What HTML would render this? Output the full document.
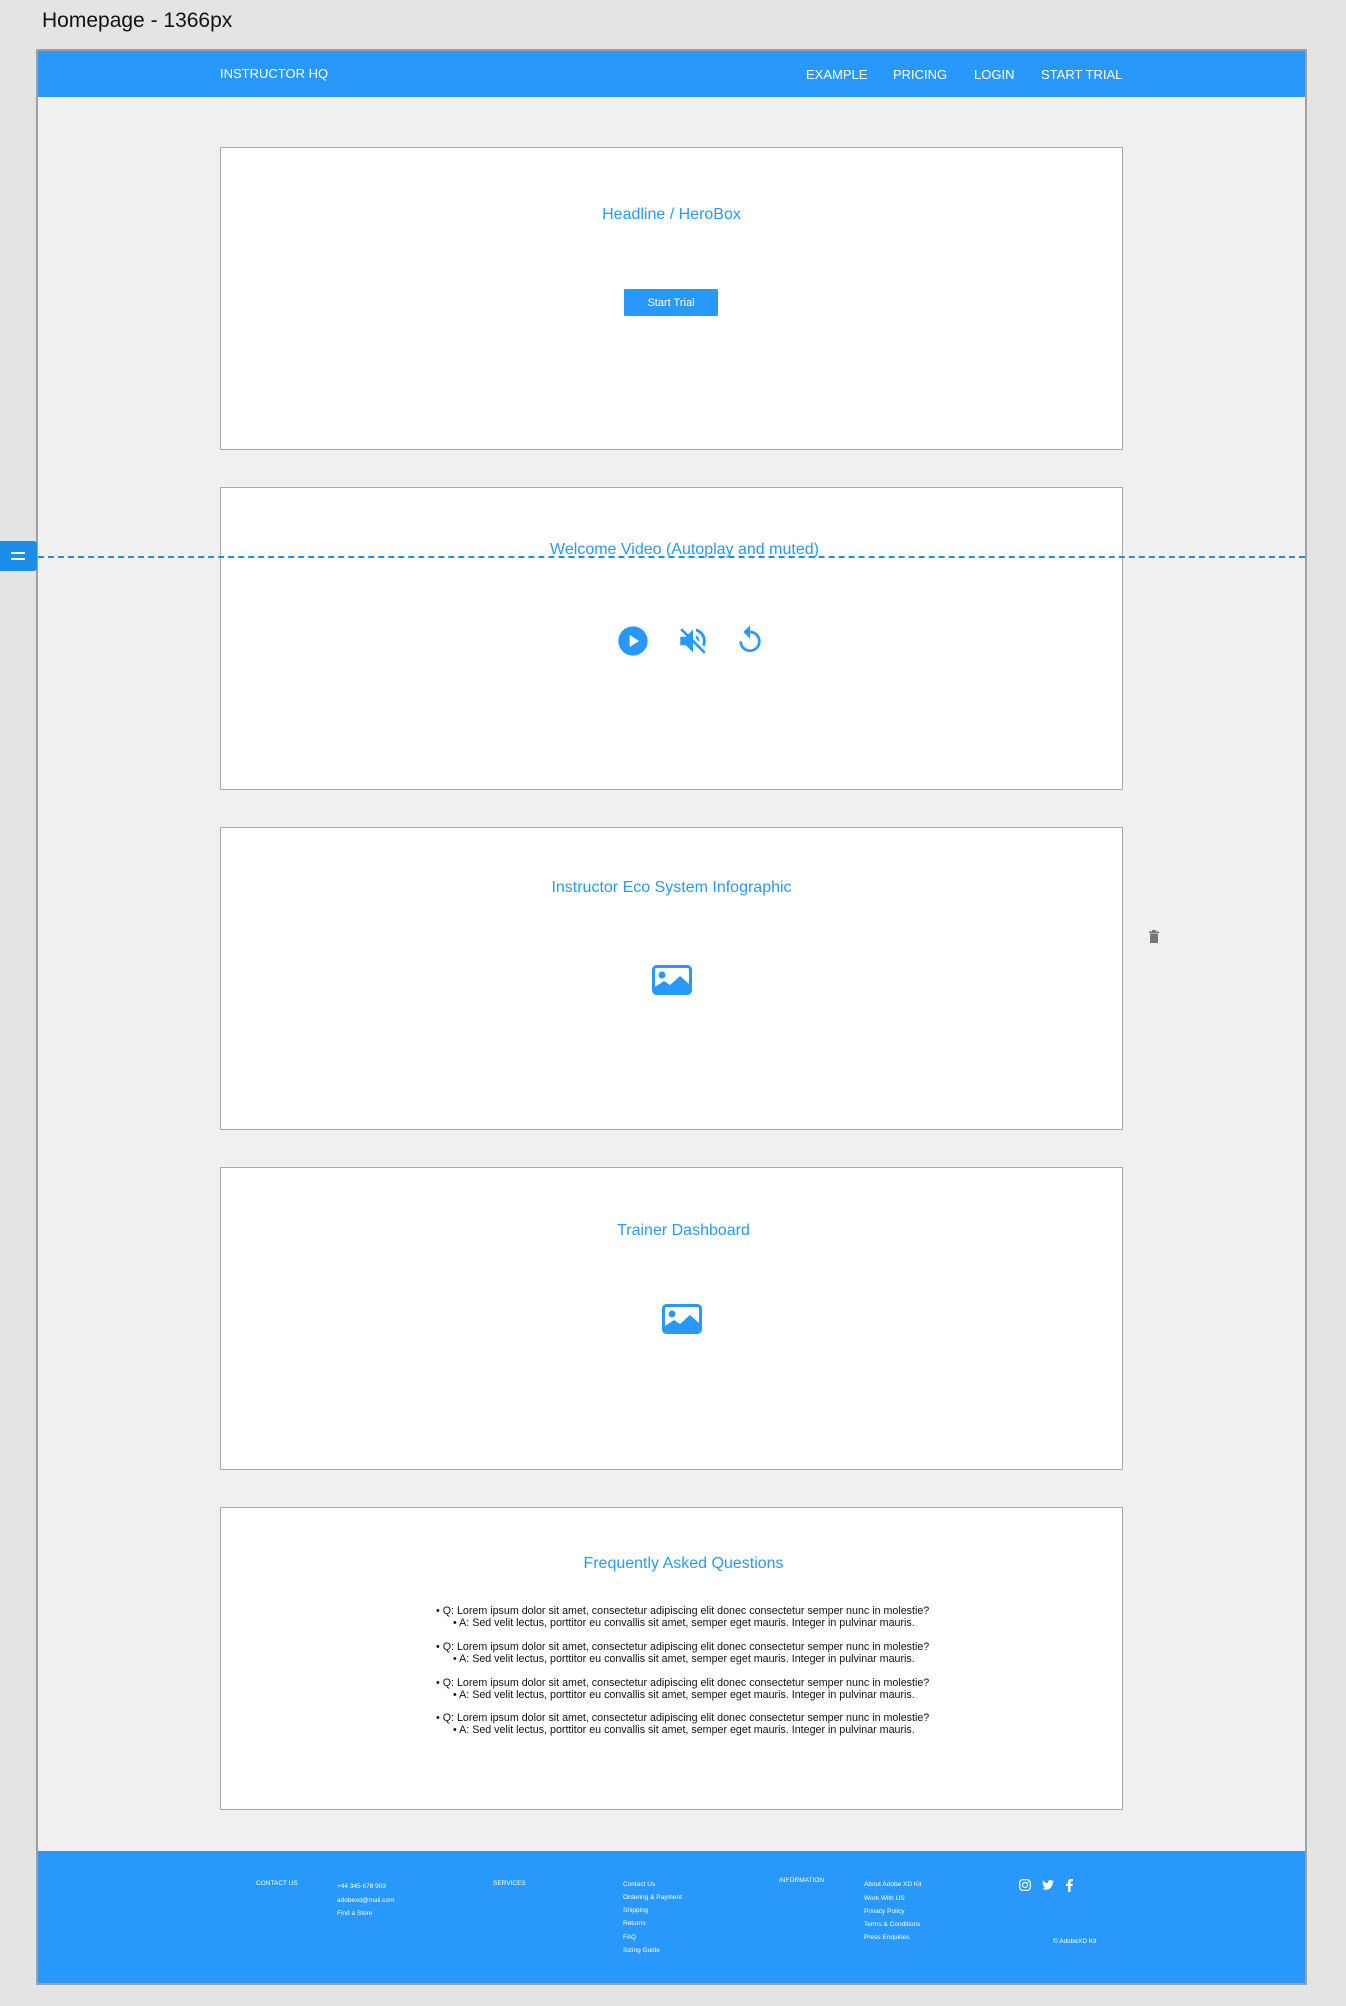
<!DOCTYPE html>
<html><head><meta charset="utf-8"><style>
*{margin:0;padding:0;box-sizing:border-box}
body{width:1346px;height:2006px;background:#e4e4e4;position:relative;overflow:hidden;font-family:"Liberation Sans",Arial,sans-serif}
.abs{position:absolute}
#title{left:42px;top:9px;font-size:21px;color:#111}
#frame{left:36px;top:49px;width:1271px;height:1936px;border:2px solid #a0a0a0;background:#f0f0f0}
#nav{left:38px;top:51px;width:1267px;height:46px;background:#2899fb}
.nt{color:#fff;font-size:13px;top:67px}
.box{left:220px;width:903px;height:303px;background:#fff;border:1.5px solid #aaa}
.h{left:220px;width:903px;text-align:center;color:#2899fb;font-size:16px}
#btn{left:624px;top:289px;width:94px;height:27px;background:#2899fb;color:#fff;font-size:11px;text-align:center;line-height:29px;border-radius:1px}
.faq{left:436px;font-size:10.7px;color:#111;white-space:nowrap;line-height:12px}
.faq span{padding-left:17px}
#foot{left:38px;top:1851px;width:1267px;height:132px;background:#2899fb}
.f{color:#fff;font-size:6.5px;white-space:nowrap}
</style></head><body>
<div id="title" class="abs">Homepage - 1366px</div>
<div id="frame" class="abs"></div>
<div id="nav" class="abs"></div>
<div class="abs nt" style="left:220px;top:66px">INSTRUCTOR HQ</div>
<div class="abs nt" style="left:806px">EXAMPLE</div>
<div class="abs nt" style="left:893px">PRICING</div>
<div class="abs nt" style="left:974px">LOGIN</div>
<div class="abs nt" style="left:1041px">START TRIAL</div>

<div class="abs box" style="top:147px"></div>
<div class="abs h" style="top:206px">Headline / HeroBox</div>
<div id="btn" class="abs">Start Trial</div>

<div class="abs box" style="top:487px"></div>
<div class="abs h" style="top:541px;left:233px">Welcome Video (Autoplay and muted)</div>
<svg class="abs" style="left:617px;top:625px" width="32" height="32" viewBox="0 0 24 24"><circle cx="12" cy="12" r="11" fill="#2899fb"/><path d="M9.5 7.5v9l7-4.5z" fill="#fff"/></svg>
<svg class="abs" style="left:675px;top:624px" width="36" height="34" viewBox="0 0 24 24" fill="#2899fb"><path d="M3 9v6h4l5 5V4L7 9H3zm13.5 3c0-1.8-1-3.3-2.5-4v2.2l2.5 2.5V12zm2.5 0c0 .9-.2 1.8-.5 2.6l1.5 1.5c.6-1.2 1-2.6 1-4.1 0-4.3-3-7.9-7-8.8v2.1c2.9.9 5 3.5 5 6.7zM4.3 3L3 4.3 19.7 21l1.3-1.3L4.3 3z"/></svg>
<svg class="abs" style="left:734px;top:623px" width="32" height="34" viewBox="0 0 24 24" fill="#2899fb"><path d="M12 5V1L7 6l5 5V7c3.3 0 6 2.7 6 6s-2.7 6-6 6-6-2.7-6-6H4c0 4.4 3.6 8 8 8s8-3.6 8-8-3.6-8-8-8z"/></svg>

<div class="abs box" style="top:827px"></div>
<div class="abs h" style="top:879px">Instructor Eco System Infographic</div>
<svg class="abs" style="left:652px;top:965px" width="40" height="30" viewBox="0 0 40 30"><rect x="1.5" y="1.5" width="37" height="27" rx="3" fill="none" stroke="#2899fb" stroke-width="3"/><circle cx="10" cy="10" r="3.5" fill="#2899fb"/><path d="M3 27V22l9-6 6 4 10-9 9 8v8z" fill="#2899fb"/></svg>
<svg class="abs" style="left:1149px;top:930px" width="10" height="13" viewBox="0 0 10 13"><rect x="3" y="0" width="4" height="1.5" fill="#777"/><rect x="0" y="1.5" width="10" height="1.5" fill="#777"/><rect x="1" y="3.5" width="8" height="9.5" fill="#777"/></svg>

<div class="abs box" style="top:1167px"></div>
<div class="abs h" style="top:1222px;left:232px">Trainer Dashboard</div>
<svg class="abs" style="left:662px;top:1304px" width="40" height="30" viewBox="0 0 40 30"><rect x="1.5" y="1.5" width="37" height="27" rx="3" fill="none" stroke="#2899fb" stroke-width="3"/><circle cx="10" cy="10" r="3.5" fill="#2899fb"/><path d="M3 27V22l9-6 6 4 10-9 9 8v8z" fill="#2899fb"/></svg>

<div class="abs box" style="top:1507px"></div>
<div class="abs h" style="top:1555px;left:232px">Frequently Asked Questions</div>
<div class="abs faq" style="top:1605px">• Q: Lorem ipsum dolor sit amet, consectetur adipiscing elit donec consectetur semper nunc in molestie?<br><span>• A: Sed velit lectus, porttitor eu convallis sit amet, semper eget mauris. Integer in pulvinar mauris.</span></div>
<div class="abs faq" style="top:1641px">• Q: Lorem ipsum dolor sit amet, consectetur adipiscing elit donec consectetur semper nunc in molestie?<br><span>• A: Sed velit lectus, porttitor eu convallis sit amet, semper eget mauris. Integer in pulvinar mauris.</span></div>
<div class="abs faq" style="top:1677px">• Q: Lorem ipsum dolor sit amet, consectetur adipiscing elit donec consectetur semper nunc in molestie?<br><span>• A: Sed velit lectus, porttitor eu convallis sit amet, semper eget mauris. Integer in pulvinar mauris.</span></div>
<div class="abs faq" style="top:1712px">• Q: Lorem ipsum dolor sit amet, consectetur adipiscing elit donec consectetur semper nunc in molestie?<br><span>• A: Sed velit lectus, porttitor eu convallis sit amet, semper eget mauris. Integer in pulvinar mauris.</span></div>

<div class="abs" style="left:38px;top:556px;width:1267px;height:0;border-top:2px dashed #1a8ee8"></div>
<div class="abs" style="left:0;top:541px;width:37px;height:30px;background:#1a8ee8;border-radius:0 3px 3px 0"></div>
<div class="abs" style="left:11px;top:552px;width:14px;height:2px;background:#fff"></div>
<div class="abs" style="left:11px;top:558px;width:14px;height:2px;background:#fff"></div>

<div id="foot" class="abs"></div>
<div class="abs f" style="left:256px;top:1880px">CONTACT US</div>
<div class="abs f" style="left:337px;top:1883px">+44 345 678 903</div>
<div class="abs f" style="left:337px;top:1897px">adobexd@mail.com</div>
<div class="abs f" style="left:337px;top:1910px">Find a Store</div>
<div class="abs f" style="left:493px;top:1880px">SERVICES</div>
<div class="abs f" style="left:623px;top:1881px">Contact Us</div>
<div class="abs f" style="left:623px;top:1894px">Ordering &amp; Payment</div>
<div class="abs f" style="left:623px;top:1907px">Shipping</div>
<div class="abs f" style="left:623px;top:1920px">Returns</div>
<div class="abs f" style="left:623px;top:1934px">FAQ</div>
<div class="abs f" style="left:623px;top:1947px">Sizing Guide</div>
<div class="abs f" style="left:779px;top:1877px">INFORMATION</div>
<div class="abs f" style="left:864px;top:1881px">About Adobe XD Kit</div>
<div class="abs f" style="left:864px;top:1895px">Work With US</div>
<div class="abs f" style="left:864px;top:1908px">Privacy Policy</div>
<div class="abs f" style="left:864px;top:1921px">Terms &amp; Conditions</div>
<div class="abs f" style="left:864px;top:1934px">Press Enquiries</div>
<div class="abs f" style="left:1053px;top:1938px">© AdobeXD Kit</div>
<svg class="abs" style="left:1019px;top:1879px" width="12" height="12" viewBox="0 0 12 12"><rect x="0.7" y="0.7" width="10.6" height="10.6" rx="3" fill="none" stroke="#fff" stroke-width="1.2"/><circle cx="6" cy="6" r="2.5" fill="none" stroke="#fff" stroke-width="1.2"/><circle cx="9" cy="3" r=".7" fill="#fff"/></svg>
<svg class="abs" style="left:1042px;top:1880px" width="12" height="10" viewBox="0 0 24 20"><path d="M24 2.4c-.9.4-1.8.7-2.8.8 1-.6 1.8-1.6 2.2-2.7-1 .6-2 1-3.1 1.2C19.4.7 18.1 0 16.6 0c-2.700 0-4.9 2.2-4.9 4.9 0 .4 0 .8.1 1.1C7.7 5.800 4.100 3.9 1.7.9c-.4.7-.7 1.6-.7 2.5 0 1.7.9 3.2 2.2 4.1-.8 0-1.6-.2-2.2-.6v.1c0 2.4 1.7 4.4 3.9 4.8-.4.1-.8.2-1.3.2-.3 0-.6 0-.9-.1.6 2 2.4 3.4 4.6 3.4-1.7 1.3-3.8 2.1-6.1 2.1-.4 0-.8 0-1.2-.1 2.2 1.4 4.8 2.2 7.5 2.2 9.1 0 14-7.5 14-14v-.6c1-.7 1.8-1.6 2.4-2.5z" fill="#fff"/></svg>
<svg class="abs" style="left:1066px;top:1879px" width="7" height="13" viewBox="0 0 7 13"><path d="M4.5 13V7h2l.3-2.3H4.5V3.3c0-.7.2-1.1 1.1-1.1H7V.1C6.7.1 6 0 5.1 0 3.3 0 2.1 1.1 2.1 3.1v1.6H0V7h2.1v6z" fill="#fff"/></svg>
</body></html>
